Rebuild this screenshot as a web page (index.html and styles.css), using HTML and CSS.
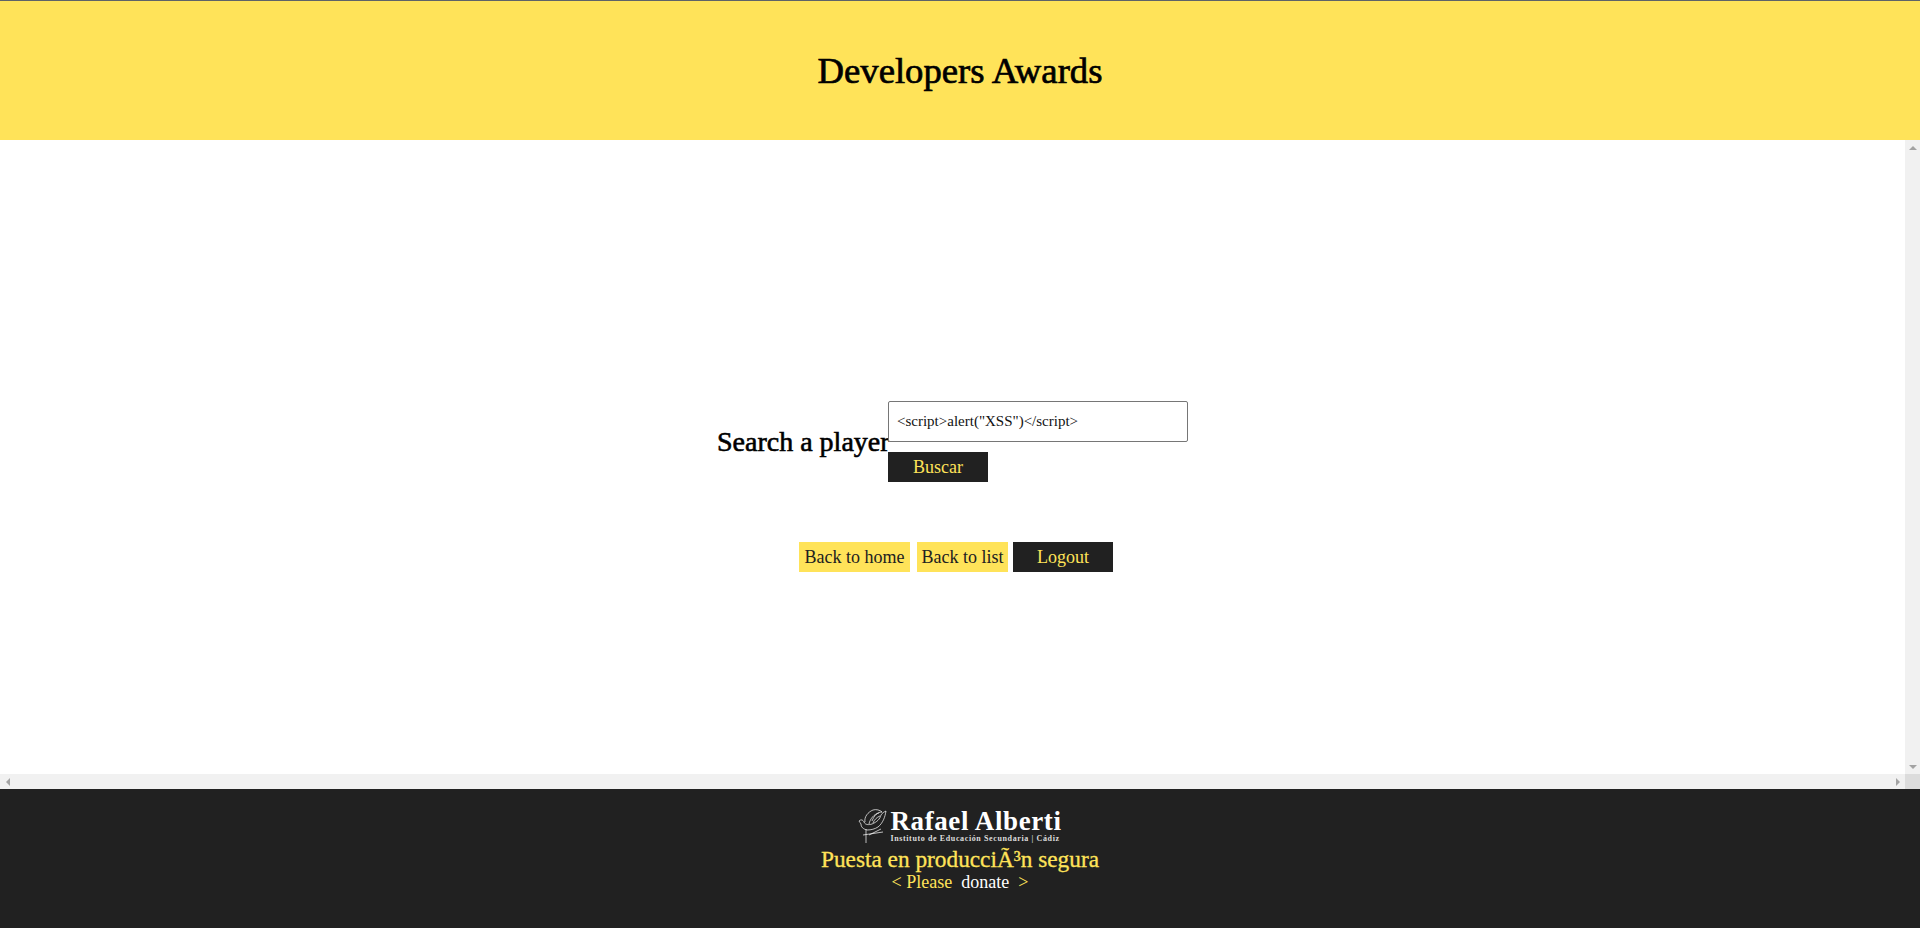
FILE: index.html
```html
<!DOCTYPE html>
<html lang="en">
<head>
    <meta charset="UTF-8">
    <meta name="viewport" content="width=device-width, initial-scale=1.0">
    <title>Developers Awards</title>
    <link rel="stylesheet" href="styles.css">
</head>
<body>
    <header class="top">
        <h1>Developers Awards</h1>
    </header>

    <div class="frame">
        <div class="frame-row">
            <main class="content">
                <form class="search">
                    <h2>Search a player</h2>
                    <div class="search-fields">
                        <input class="search-input" type="text" value='&lt;script&gt;alert("XSS")&lt;/script&gt;'>
                        <button class="btn btn-dark" type="button">Buscar</button>
                    </div>
                </form>
                <nav class="links">
                    <a class="btn btn-yellow btn-home" href="#">Back to home</a>
                    <a class="btn btn-yellow btn-list" href="#">Back to list</a>
                    <a class="btn btn-dark" href="#">Logout</a>
                </nav>
            </main>
            <!-- vertical scrollbar -->
            <div class="bar bar-v">
                <span class="bar-btn"><i class="arrow arrow-up"></i></span>
                <span class="bar-btn"><i class="arrow arrow-down"></i></span>
            </div>
        </div>
        <!-- horizontal scrollbar -->
        <div class="bar bar-h">
            <span class="bar-btn"><i class="arrow arrow-left"></i></span>
            <span class="bar-btn bar-end"><i class="arrow arrow-right"></i></span>
            <span class="bar-corner"></span>
        </div>
    </div>

    <footer class="bottom">
        <div class="logo">
            <svg class="logo-bird" width="29" height="34" viewBox="0 0 29 34" fill="none" stroke="#ffffff" stroke-width="0.7">
                <path d="M1 12c2-2 4-1 5 1 1 3 5 3 8 2 5-2 8-5 9-9 1-2 3-3 5-4-1 6-3 12-8 16-3 2-7 3-11 3-4-1-6-3-6-6-1-1-1-2-2-3z"/>
                <path d="M7 13c-1-5 3-10 8-12 3-1 7 0 9 2-5 0-8 4-10 9M11 15c1-5 5-10 10-11M15 14c1-3 4-6 7-7"/>
                <path d="M5 26l20-3M11 26l12-6M8 20v14"/>
            </svg>
            <div class="logo-text">
                <span class="logo-name">Rafael Alberti</span>
                <span class="logo-sub">Instituto de Educación Secundaria | Cádiz</span>
            </div>
        </div>
        <p class="course">Puesta en producciÃ³n segura</p>
        <p class="donate"><span>&lt; Please</span><a href="#">donate</a><span>&gt;</span></p>
    </footer>
</body>
</html>
```

FILE: styles.css
```css
* {
    margin: 0;
    padding: 0;
    box-sizing: border-box;
}

html, body {
    height: 100%;
}

body {
    display: flex;
    flex-direction: column;
    overflow: hidden;
    font-family: "Liberation Serif", serif;
    background-color: #ffffff;
}

.top {
    height: 140px;
    flex: none;
    display: flex;
    align-items: center;
    justify-content: center;
    background-color: #ffe359;
    border-top: 1px solid #5f6368;
}

.top h1 {
    font-size: 36.7px;
    font-weight: 400;
    color: #000000;
    -webkit-text-stroke: 0.7px #000000;
}

.frame {
    flex: 1;
    display: flex;
    flex-direction: column;
}

.frame-row {
    flex: 1;
    display: flex;
}

.content {
    flex: 1;
    padding-top: 261px;
    display: flex;
    flex-direction: column;
    align-items: center;
}

/* scrollbars */
.bar {
    flex: none;
    display: flex;
    justify-content: space-between;
    background-color: #f1f1f1;
}

.bar-v {
    width: 15px;
    flex-direction: column;
}

.bar-h {
    height: 15px;
}

.bar-btn {
    width: 15px;
    height: 15px;
    display: flex;
    align-items: center;
    justify-content: center;
}

.bar-end {
    margin-left: auto;
}

.bar-corner {
    width: 15px;
    height: 15px;
    background-color: #dcdcdc;
}

.arrow {
    width: 0;
    height: 0;
    border-style: solid;
    border-color: transparent;
}

.arrow-up {
    border-width: 0 4px 4px;
    border-bottom-color: #a3a3a3;
}

.arrow-down {
    border-width: 4px 4px 0;
    border-top-color: #a3a3a3;
}

.arrow-left {
    border-width: 4px 4px 4px 0;
    border-right-color: #a3a3a3;
}

.arrow-right {
    border-width: 4px 0 4px 4px;
    border-left-color: #a3a3a3;
}

.search {
    display: flex;
    align-items: center;
    width: 471px;
}

.search h2 {
    width: 171px;
    font-size: 28px;
    font-weight: 400;
    white-space: nowrap;
    color: #000000;
    -webkit-text-stroke: 0.6px #000000;
}

.search-fields {
    display: flex;
    flex-direction: column;
    align-items: flex-start;
    gap: 10px;
}

.search-input {
    width: 300px;
    height: 41px;
    padding: 0 8px;
    border: 1px solid #767676;
    border-radius: 2px;
    font-family: "Liberation Serif", serif;
    font-size: 15px;
    color: #111111;
}

.btn {
    display: block;
    height: 30px;
    line-height: 30px;
    border: 0;
    font-family: "Liberation Serif", serif;
    font-size: 18px;
    text-align: center;
    text-decoration: none;
}

.btn-dark {
    width: 100px;
    background-color: #212121;
    color: #ffe359;
}

.btn-yellow {
    background-color: #ffe359;
    color: #212121;
}

.btn-home {
    width: 111px;
    margin-right: 2px;
}

.btn-list {
    width: 91px;
}

.links {
    display: flex;
    gap: 5px;
    margin-top: 60px;
    margin-left: 7px;
}

.bottom {
    height: 139px;
    flex: none;
    padding-top: 19px;
    background-color: #212121;
    text-align: center;
}

.logo {
    display: flex;
    justify-content: center;
    align-items: center;
    gap: 3px;
    height: 36px;
}

.logo-text {
    display: flex;
    flex-direction: column;
    align-items: flex-start;
    color: #ffffff;
}

.logo-name {
    font-size: 27px;
    line-height: 25px;
    font-weight: 700;
    letter-spacing: 0.6px;
}

.logo-sub {
    font-size: 8px;
    line-height: 9px;
    font-weight: 700;
    letter-spacing: 0.62px;
    color: #dddddd;
}

.course {
    margin-top: 1px;
    font-size: 23.3px;
    line-height: 28px;
    color: #ffe359;
    -webkit-text-stroke: 0.3px #ffe359;
}

.donate {
    display: flex;
    justify-content: center;
    gap: 9px;
    font-size: 18px;
    line-height: 18px;
    color: #ffe359;
}

.donate a {
    color: #ffffff;
    text-decoration: none;
}
```
